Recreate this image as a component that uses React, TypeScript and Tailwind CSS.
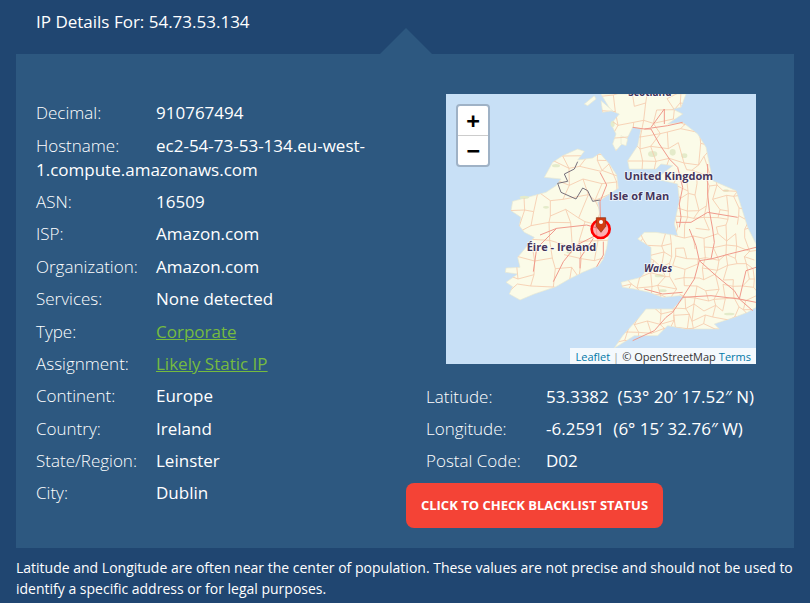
const leftRows: { label: string; value: string; link?: boolean }[] = [
  { label: "Decimal:", value: "910767494" },
  { label: "Hostname:", value: "ec2-54-73-53-134.eu-west-1.compute.amazonaws.com" },
  { label: "ASN:", value: "16509" },
  { label: "ISP:", value: "Amazon.com" },
  { label: "Organization:", value: "Amazon.com" },
  { label: "Services:", value: "None detected" },
  { label: "Type:", value: "Corporate", link: true },
  { label: "Assignment:", value: "Likely Static IP", link: true },
  { label: "Continent:", value: "Europe" },
  { label: "Country:", value: "Ireland" },
  { label: "State/Region:", value: "Leinster" },
  { label: "City:", value: "Dublin" },
];

const rightRows = [
  { label: "Latitude:", value: "53.3382\u00a0 (53° 20′ 17.52″ N)" },
  { label: "Longitude:", value: "-6.2591\u00a0 (6° 15′ 32.76″ W)" },
  { label: "Postal Code:", value: "D02" },
];

// map drawing, coordinates are map pixels x 3
const land = [
  "M395 165L415 172L395 198L440 192L462 178L490 210L512 243L517 283L490 300L455 325L462 370L490 408L482 463L472 495L458 515L410 535L370 555L330 578L265 600L222 618L190 600L200 578L180 565L215 540L178 535L180 522L222 520L215 490L265 430L235 415L220 395L225 370L195 350L200 322L300 295L330 275L345 255L295 250L320 205L350 185Z",
  "M465 0L720 0L705 40L680 45L710 60L665 90L710 85L755 120L780 160L790 210L800 260L870 290L880 320L905 400L930 450L930 640L905 655L865 670L805 690L820 705L790 705L720 705L665 695L635 725L565 725L525 750L505 762L530 725L580 670L600 645L680 645L715 610L700 605L650 610L610 595L565 585L530 580L525 565L585 550L615 510L615 460L575 435L595 415L630 415L695 425L685 390L700 320L695 270L630 255L680 215L645 210L630 225L550 225L545 200L575 155L585 105L560 100L545 130L510 170L500 150L510 120L495 90L520 60L495 50Z",
  "M415 30L445 5L450 15L425 35Z",
  "M525 125L545 135L540 155L525 150Z",
  "M465 20L500 50L470 55Z",
];

const greenPatches: [number, number, number, number][] = [
  [235, 310, 14, 5], [330, 215, 12, 5], [300, 340, 9, 4], [370, 475, 9, 4],
  [620, 180, 14, 9], [680, 175, 9, 10], [715, 185, 9, 7], [840, 290, 9, 4],
  [640, 545, 14, 5], [650, 590, 12, 4], [500, 90, 6, 9], [850, 660, 16, 4],
];

// fake minor road network: a jittered grid, clipped to the land
function roadNetwork(x0: number, y0: number, x1: number, y1: number, step: number, seed: number) {
  let s = seed;
  const rnd = () => {
    s = (s * 16807) % 2147483647;
    return s / 2147483647;
  };
  const pts: [number, number][][] = [];
  for (let y = y0; y <= y1; y += step) {
    const row: [number, number][] = [];
    for (let x = x0; x <= x1; x += step) {
      row.push([Math.round(x + (rnd() - 0.5) * step * 0.8), Math.round(y + (rnd() - 0.5) * step * 0.8)]);
    }
    pts.push(row);
  }
  let d = "";
  pts.forEach((row, j) =>
    row.forEach(([x, y], i) => {
      if (i + 1 < row.length && rnd() > 0.2) d += `M${x} ${y}L${row[i + 1][0]} ${row[i + 1][1]}`;
      if (j + 1 < pts.length && rnd() > 0.2) d += `M${x} ${y}L${pts[j + 1][i][0]} ${pts[j + 1][i][1]}`;
    }),
  );
  return d;
}

const minorNets = [
  roadNetwork(690, 250, 930, 700, 30, 77123),
  roadNetwork(510, 410, 700, 760, 34, 311777),
  roadNetwork(470, 0, 800, 250, 40, 1409555),
  roadNetwork(180, 170, 520, 620, 46, 9011333),
];

const majorRoads = [
  "M595 105L615 105L640 150L670 195L695 220L710 280L700 330L705 370L700 400",
  "M760 500L745 555L710 610L680 655L660 670L625 710L560 740",
  "M710 610L795 605L880 615L930 625", "M760 500L810 545L865 590L880 615",
  "M760 500L750 455L730 405", "M795 495L805 445L800 405L790 350L785 300L785 210",
  "M690 385L735 385L785 355L875 370", "M595 585L650 600L710 595", "M595 105L665 95L710 85",
  "M615 100L655 45L655 90", "M560 100L595 105", "M760 500L795 495L850 480L930 460",
  "M880 615L900 530L930 520", "M880 615L920 650",
  "M464 405L422 393L332 403L282 423", "M452 423L392 453L352 503L322 563",
  "M442 433L402 493L402 523", "M464 405L462 323L482 273L462 235", "M472 443L472 483L452 518",
  "M332 403L272 463L262 533",
];

const border = "M395 203L385 225L355 240L365 262L335 268L345 295L390 315L410 282L425 290L440 322L462 318";

function MapLabel({ x, y, size = 33, italic, children }: { x: number; y: number; size?: number; italic?: boolean; children: string }) {
  return (
    <text
      x={x}
      y={y}
      fontSize={size}
      fontWeight={700}
      fontStyle={italic ? "italic" : "normal"}
      fill="#44355c"
      stroke="#ffffff"
      strokeOpacity={0.7}
      strokeWidth={5}
      paintOrder="stroke"
    >
      {children}
    </text>
  );
}

function IpMap() {
  return (
    <div className="relative h-[270px] w-[310px] overflow-hidden bg-[#c8e0f6]">
      <svg viewBox="0 0 930 810" className="block h-full w-full font-['Open_Sans',sans-serif]">
        <defs>
          <clipPath id="land">
            {land.map((d) => (
              <path key={d} d={d} />
            ))}
          </clipPath>
        </defs>
        <g className="blur-[0.3px]">
          {land.map((d) => (
            <path key={d} d={d} fill="#fbfbe8" stroke="#e9e8d2" strokeWidth={2} strokeLinejoin="round" />
          ))}
          {greenPatches.map(([cx, cy, rx, ry]) => (
            <ellipse key={`${cx}-${cy}`} cx={cx} cy={cy} rx={rx} ry={ry} fill="#e4ebca" />
          ))}
          <g clipPath="url(#land)">
            {minorNets.map((d) => (
              <path key={d} d={d} fill="none" stroke="#f5caac" strokeWidth={2.5} />
            ))}
          </g>
          {majorRoads.map((d) => (
            <path key={d} d={d} fill="none" stroke="#f09a8c" strokeWidth={3} strokeLinejoin="round" />
          ))}
          <path d={border} fill="none" stroke="#5d5566" strokeWidth={2.5} />
        </g>
        <MapLabel x={547} y={5} size={30}>Scotland</MapLabel>
        <MapLabel x={535} y={258}>United Kingdom</MapLabel>
        <MapLabel x={490} y={318}>Isle of Man</MapLabel>
        <MapLabel x={242} y={472}>Éire - Ireland</MapLabel>
        <MapLabel x={594} y={533} size={30} italic>Wales</MapLabel>
        <circle cx={464} cy={405} r={27} fill="#f03" fillOpacity={0.3} stroke="#f00" strokeWidth={8} />
        <path d="M451 371H479V397L465 415L451 397Z" fill="#d13c12" stroke="#8a2a0c" strokeWidth={2} />
        <circle cx={465} cy={384} r={6} fill="#ffffff" />
      </svg>

      {/* zoom control */}
      <div className="absolute left-[10px] top-[10px] w-[34px] overflow-hidden rounded border-2 border-[#9fb2c6] bg-white font-['DejaVu_Sans_Mono',monospace] text-black">
        <div className="flex h-[30px] items-center justify-center border-b border-[#ccc] text-[22px] font-bold">+</div>
        <div className="flex h-[29px] items-center justify-center text-[22px] font-bold">−</div>
      </div>

      <div className="absolute bottom-0 right-0 flex h-4 items-center bg-white/80 px-[5px] text-[11px] leading-none text-[#333]">
        <span className="text-[#0078a8]">Leaflet</span>
        <span className="mx-[3px] text-[#999]">|</span>
        <span>© OpenStreetMap</span>
        <span className="ml-[3px] text-[#0078a8]">Terms</span>
      </div>
    </div>
  );
}

export default function App() {
  return (
    <div className="h-[603px] w-[810px] overflow-hidden bg-[#204671] font-['Open_Sans',sans-serif] text-white">
      <div className="h-[54px] pl-9 pt-[10px] text-[17px] leading-6">IP Details For: 54.73.53.134</div>

      <section className="relative mx-4 flex h-[494px] bg-[#2d5880]">
        <div className="absolute -top-[26px] left-[364px] h-[26px] w-[52px] bg-[#2d5880] [clip-path:polygon(50%_0,100%_100%,0_100%)]" />

        <div className="w-[390px] pl-5 pr-5 pt-[47.4px] text-[17px] leading-6">
          {leftRows.map((row) => (
            <div key={row.label} className="mb-[8.36px]">
              <span className="inline-block w-[120px] font-light">{row.label}</span>
              {row.link ? (
                <a href="#" className="text-[#76bb3f] underline">{row.value}</a>
              ) : (
                <span>{row.value}</span>
              )}
            </div>
          ))}
        </div>

        <div className="pt-10">
          <div className="ml-10">
            <IpMap />
          </div>
          <div className="ml-5 mt-[20.5px] text-[17px] leading-6">
            {rightRows.map((row) => (
              <div key={row.label} className="mb-[8.25px] whitespace-nowrap">
                <span className="inline-block w-[120px] font-light">{row.label}</span>
                <span>{row.value}</span>
              </div>
            ))}
          </div>
          <button className="mt-[1.5px] h-[45px] w-[257px] rounded-lg bg-[#f44336] text-[13px] font-bold uppercase text-white">
            Click to check blacklist status
          </button>
        </div>
      </section>

      <p className="pl-4 pt-[9px] text-sm leading-[21px]">
        Latitude and Longitude are often near the center of population. These values are not precise and should not be used to identify a specific address or for legal purposes.
      </p>
    </div>
  );
}
